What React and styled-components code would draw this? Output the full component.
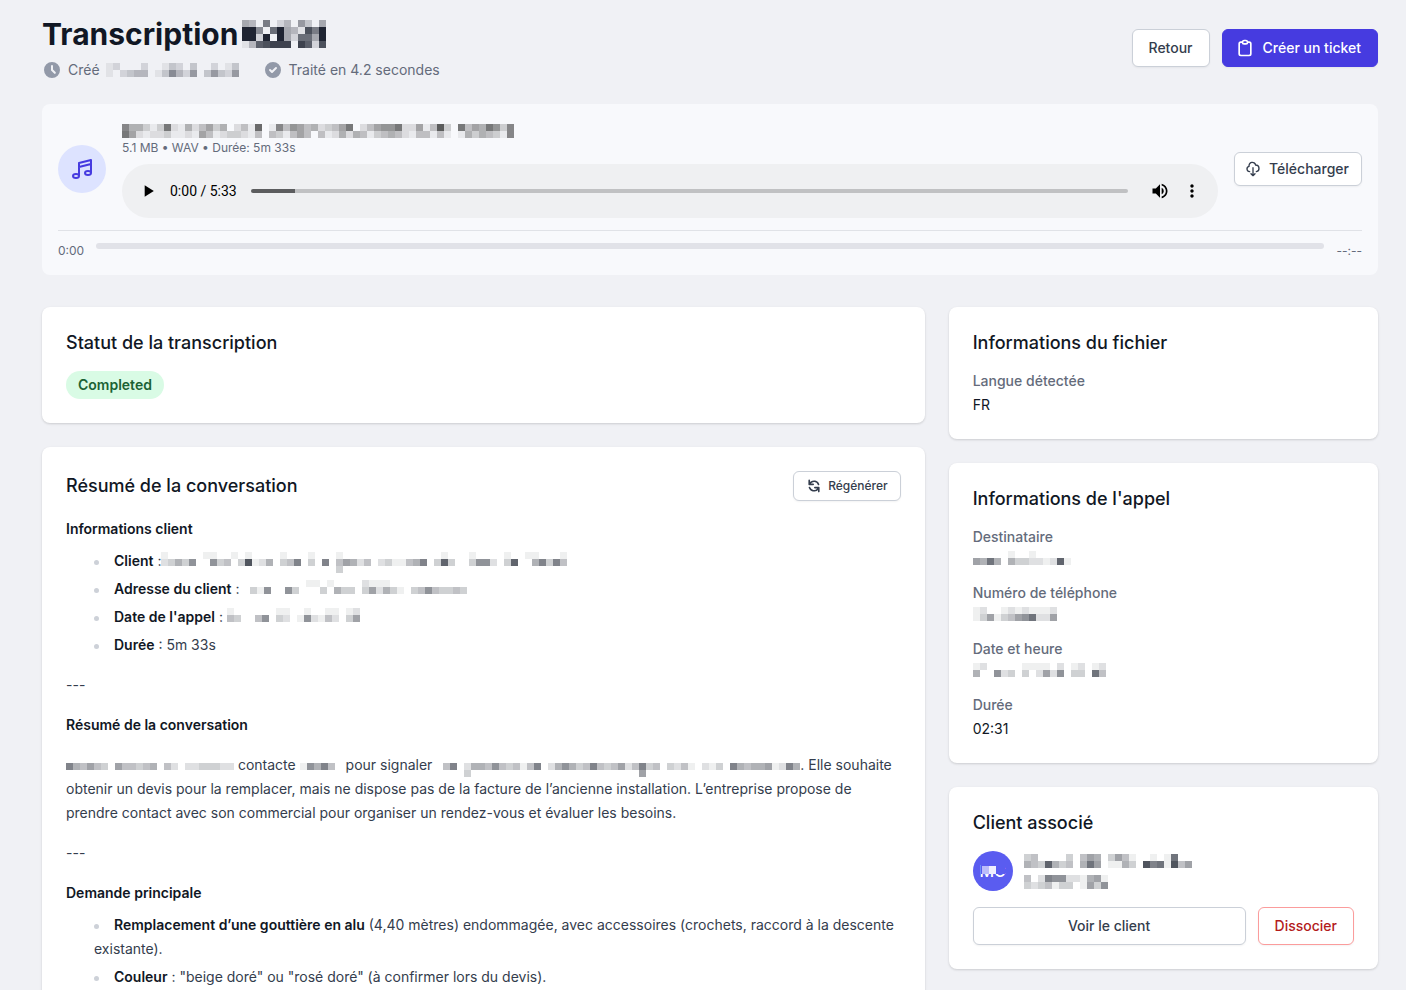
import React, { useState } from 'react';
import styled, { createGlobalStyle, css } from 'styled-components';
import {
  HiCheckCircle,
  HiClock,
  HiOutlineClipboard,
  HiOutlineCloudDownload,
  HiOutlineMusicNote,
  HiRefresh,
} from 'react-icons/hi';
import { MdMoreVert, MdPlayArrow, MdVolumeUp } from 'react-icons/md';

const GlobalStyle = createGlobalStyle`
  *, *::before, *::after {
    box-sizing: border-box;
  }
  body {
    margin: 0;
    background: #f0f1f5;
    color: #111724;
    font-family: Inter, 'Liberation Sans', sans-serif;
    font-size: 14px;
    line-height: 20px;
  }
  h1, h2, h3, p, ul, dl, dd {
    margin: 0;
    padding: 0;
  }
  button {
    font-family: inherit;
    cursor: pointer;
  }
`;

const Page = styled.main`
  padding: 16px 28px 24px 42px;
`;

const Header = styled.header`
  display: flex;
  align-items: center;
  justify-content: space-between;
`;

const Title = styled.h1`
  display: flex;
  align-items: center;
  gap: 4px;
  font-size: 30px;
  line-height: 36px;
  font-weight: 700;
`;

const MetaList = styled.div`
  display: flex;
  gap: 24px;
  margin-top: 8px;
  color: #646b7b;
`;

const Meta = styled.div`
  display: flex;
  align-items: center;
  gap: 6px;

  > svg:first-child {
    color: #9299a8;
  }
`;

const Actions = styled.div`
  display: flex;
  gap: 12px;
`;

const sizes = {
  small: css`
    padding: 6px 12px;
    font-size: 12px;
    line-height: 16px;
    gap: 6px;
  `,
  medium: css`
    padding: 8px 12px;
    font-size: 14px;
    line-height: 16px;
    gap: 8px;

    svg {
      margin-left: -2px;
    }
  `,
  large: css`
    padding: 8px 16px;
    font-size: 14px;
    line-height: 20px;
    gap: 8px;

    svg {
      margin-left: -4px;
    }
  `,
};

const variants = {
  plain: css`
    background: white;
    border-color: #cbd0d8;
    color: #343d4d;
  `,
  primary: css`
    background: #463be0;
    border-color: #463be0;
    color: white;
  `,
  danger: css`
    background: white;
    border-color: #fb9c9c;
    color: #b31b1b;
  `,
};

const Button = styled.button`
  display: inline-flex;
  align-items: center;
  justify-content: center;
  border: 1px solid;
  border-radius: 6px;
  font-weight: 500;
  white-space: nowrap;
  box-shadow: 0 1px 2px rgba(0, 0, 0, 0.05);
  flex: ${({ $grow }) => ($grow ? 1 : 'none')};
  ${({ $size = 'large' }) => sizes[$size]}
  ${({ $variant = 'plain' }) => variants[$variant]}
`;

const AudioPanel = styled.section`
  margin-top: 24px;
  padding: 16px;
  border-radius: 8px;
  background: #f8f9fc;
`;

const AudioRow = styled.div`
  display: flex;
  align-items: center;
  gap: 16px;
`;

const MusicBadge = styled.div`
  display: flex;
  align-items: center;
  justify-content: center;
  width: 48px;
  height: 48px;
  flex: none;
  border-radius: 50%;
  background: #dde3ff;
  color: #463be0;
`;

const AudioBody = styled.div`
  flex: 1;
  min-width: 0;
`;

const FileName = styled.div`
  height: 20px;
  padding-top: 4px;
`;

const FileMeta = styled.p`
  font-size: 12px;
  line-height: 16px;
  color: #646b7b;
`;

const Player = styled.div`
  display: flex;
  align-items: center;
  height: 54px;
  margin-top: 8px;
  padding: 0 16px;
  gap: 12px;
  border-radius: 27px;
  background: #eff0f2;
`;

const PlayerButton = styled.button`
  display: flex;
  padding: 0;
  border: 0;
  background: none;
  color: black;
`;

const PlayerTime = styled.span`
  font-family: Roboto, sans-serif;
  color: black;
`;

const Seek = styled.input`
  flex: 1;
  min-width: 0;
  height: 4px;
  margin: 0 10px 0 2px;
  appearance: none;
  border-radius: 2px;
  background: linear-gradient(to right, #5c5d5f 5%, #c0c1c3 5%);

  &::-webkit-slider-thumb {
    appearance: none;
    width: 4px;
    height: 4px;
    background: transparent;
  }
`;

const ProgressRow = styled.div`
  display: flex;
  gap: 12px;
  margin-top: 12px;
  padding-top: 12px;
  border-top: 1px solid #e0e2e7;
  font-size: 12px;
  line-height: 16px;
  color: #646b7b;
`;

const ProgressTrack = styled.div`
  flex: 1;
  height: 6px;
  border-radius: 3px;
  background: #e1e2e8;
`;

const Columns = styled.div`
  display: grid;
  grid-template-columns: repeat(3, minmax(0, 1fr));
  gap: 24px;
  margin-top: 32px;
  align-items: start;
`;

const Column = styled.div`
  display: grid;
  gap: 24px;
  grid-column: span ${({ $span }) => $span};
`;

const Card = styled.section`
  padding: 24px;
  border-radius: 8px;
  background: white;
  box-shadow: 0 1px 3px rgba(0, 0, 0, 0.1), 0 1px 2px rgba(0, 0, 0, 0.06);
`;

const CardHeader = styled.div`
  display: flex;
  align-items: center;
  justify-content: space-between;
  margin-bottom: 16px;
`;

const CardTitle = styled.h2`
  font-size: 18px;
  line-height: 24px;
  font-weight: 500;
`;

const Badge = styled.span`
  display: inline-block;
  padding: 4px 12px;
  border-radius: 14px;
  background: #d9fbe5;
  color: #1b6234;
  font-weight: 600;
  vertical-align: top;
`;

const Summary = styled.div`
  line-height: 24px;
  color: #343d4d;

  h3 {
    margin: 16px 0 8px;
    font-size: 14px;
    font-weight: 600;
    color: #111724;
  }
  h3:first-child {
    margin-top: 0;
  }
  p {
    margin: 16px 0;
  }
  ul {
    margin: 8px 0 16px;
    padding-left: 28px;
    list-style: none;
  }
  li + li {
    margin-top: 4px;
  }
  li::before {
    content: '';
    display: inline-block;
    width: 5px;
    height: 5px;
    margin-right: 15px;
    border-radius: 50%;
    background: #cdd1d8;
    vertical-align: middle;
  }
  strong {
    font-weight: 600;
    color: #111724;
  }
`;

const Details = styled.dl`
  display: grid;
  gap: 12px;

  dt {
    font-weight: 500;
    color: #646b7b;
  }
  dd {
    height: 20px;
    margin-top: 4px;
  }
`;

const ClientRow = styled.div`
  display: flex;
  align-items: center;
  gap: 11px;
`;

const Avatar = styled.div`
  position: relative;
  display: flex;
  align-items: center;
  justify-content: center;
  width: 40px;
  height: 40px;
  border-radius: 50%;
  background: #5a5cf0;
  color: white;
  font-size: 16px;
  font-weight: 500;

  svg {
    position: absolute;
    left: 8px;
    top: 12px;
  }
`;

const ClientLines = styled.div`
  display: grid;
  gap: 7px;
`;

const ClientActions = styled.div`
  display: flex;
  gap: 12px;
  margin-top: 16px;
`;

const MosaicSvg = styled.svg`
  flex: none;
  vertical-align: ${({ $inline }) => ($inline ? 'middle' : 'top')};
`;

const CELL = 7;

// Pixelated block for masked data: one hex digit per cell, 0 is clear and f is solid
const Mosaic = ({ rows, inline, color = '#111724' }) => (
  <MosaicSvg
    $inline={inline}
    width={rows[0].length * CELL}
    height={rows.length * CELL}
    shapeRendering="crispEdges"
    aria-hidden="true"
  >
    {rows.map((row, y) =>
      [...row].map(
        (level, x) =>
          level !== '0' && (
            <rect
              key={`${x}-${y}`}
              x={x * CELL}
              y={y * CELL}
              width={CELL}
              height={CELL}
              fill={color}
              fillOpacity={parseInt(level, 16) / 15}
            />
          )
      )
    )}
  </MosaicSvg>
);

const pad = (digits, length) => digits.padEnd(length, '0');

const masked = {
  title: ['540802406305', 'ee709e541b8e', 'ee2e0e52995e', '14abccc0ca2b'],
  created: ['1200020013203002013', '1023440137426036326'],
  file: [
    '8553139215246350241a0184764523469024677922614b3094659738',
    '96212231121641233214043146404125254134542144141015354318',
  ],
  client: [
    '1000001100101000010001000100000000000000100010000100110001',
    '235370073403b125034803080465240231145803a300377203a0058384',
    pad('0000000000000000000000000' + '3', 58),
  ],
  address: ['00000000011010000211100000000000', '03170073000305330362531034743343', pad('', 32)],
  date: ['1000000110010011012', '4300470320172142036', pad('', 19)],
  caller: [pad('', 24), '854643064434504202233322', pad('', 24)],
  company: ['000000', '175840', '000000'],
  reason: [
    pad('', 52),
    '0480255474341480257534843462483403241021308545561285',
    pad('000030000000000000000000000006', 52),
  ],
  recipient: ['00000100100000', '659505332212a1'],
  phone: ['120012121112', '136134679226'],
  callDate: ['1200000111102012012', '5007230302627033094'],
  clientName: ['340000304650364100101900', '543a5340596011530b891b46'],
  clientRef: ['402877221561', '323413301637'],
};

const AudioPlayer = () => {
  const [position, setPosition] = useState(0);

  return (
    <Player>
      <PlayerButton type="button" aria-label="Lecture">
        <MdPlayArrow size={20} />
      </PlayerButton>
      <PlayerTime>0:00 / 5:33</PlayerTime>
      <Seek
        type="range"
        min="0"
        max="333"
        value={position}
        onChange={(e) => setPosition(Number(e.target.value))}
        aria-label="Position de lecture"
      />
      <PlayerButton type="button" aria-label="Volume">
        <MdVolumeUp size={20} />
      </PlayerButton>
      <PlayerButton type="button" aria-label="Plus d'options">
        <MdMoreVert size={20} />
      </PlayerButton>
    </Player>
  );
};

const App = () => {
  return (
    <>
      <GlobalStyle />
      <Page>
        <Header>
          <div>
            <Title>
              Transcription <Mosaic rows={masked.title} />
            </Title>
            <MetaList>
              <Meta>
                <HiClock size={20} />
                Créé <Mosaic rows={masked.created} />
              </Meta>
              <Meta>
                <HiCheckCircle size={20} />
                Traité en 4.2 secondes
              </Meta>
            </MetaList>
          </div>
          <Actions>
            <Button type="button">Retour</Button>
            <Button type="button" $variant="primary">
              <HiOutlineClipboard size={20} />
              Créer un ticket
            </Button>
          </Actions>
        </Header>

        <AudioPanel>
          <AudioRow>
            <MusicBadge>
              <HiOutlineMusicNote size={24} />
            </MusicBadge>
            <AudioBody>
              <FileName>
                <Mosaic rows={masked.file} color="#222222" />
              </FileName>
              <FileMeta>5.1 MB • WAV • Durée: 5m 33s</FileMeta>
              <AudioPlayer />
            </AudioBody>
            <Button type="button" $size="medium">
              <HiOutlineCloudDownload size={16} />
              Télécharger
            </Button>
          </AudioRow>
          <ProgressRow>
            <span>0:00</span>
            <ProgressTrack role="progressbar" aria-label="Progression" aria-valuenow={0} />
            <span>--:--</span>
          </ProgressRow>
        </AudioPanel>

        <Columns>
          <Column $span={2}>
            <Card>
              <CardHeader>
                <CardTitle>Statut de la transcription</CardTitle>
              </CardHeader>
              <Badge>Completed</Badge>
            </Card>

            <Card>
              <CardHeader>
                <CardTitle>Résumé de la conversation</CardTitle>
                <Button type="button" $size="small">
                  <HiRefresh size={16} />
                  Régénérer
                </Button>
              </CardHeader>
              <Summary>
                <h3>Informations client</h3>
                <ul>
                  <li>
                    <strong>Client</strong> :<Mosaic inline rows={masked.client} />
                  </li>
                  <li>
                    <strong>Adresse du client</strong> : <Mosaic inline rows={masked.address} />
                  </li>
                  <li>
                    <strong>Date de l'appel</strong> : <Mosaic inline rows={masked.date} />
                  </li>
                  <li>
                    <strong>Durée</strong> : 5m 33s
                  </li>
                </ul>
                <p>---</p>
                <h3>Résumé de la conversation</h3>
                <p>
                  <Mosaic inline rows={masked.caller} /> contacte{' '}
                  <Mosaic inline rows={masked.company} /> pour signaler{' '}
                  <Mosaic inline rows={masked.reason} />. Elle souhaite obtenir un devis pour la
                  remplacer, mais ne dispose pas de la facture de l’ancienne installation.
                  L’entreprise propose de prendre contact avec son commercial pour organiser un
                  rendez-vous et évaluer les besoins.
                </p>
                <p>---</p>
                <h3>Demande principale</h3>
                <ul>
                  <li>
                    <strong>Remplacement d’une gouttière en alu</strong> (4,40 mètres) endommagée,
                    avec accessoires (crochets, raccord à la descente existante).
                  </li>
                  <li>
                    <strong>Couleur</strong> : "beige doré" ou "rosé doré" (à confirmer lors du
                    devis).
                  </li>
                </ul>
              </Summary>
            </Card>
          </Column>

          <Column $span={1}>
            <Card>
              <CardHeader>
                <CardTitle>Informations du fichier</CardTitle>
              </CardHeader>
              <Details>
                <div>
                  <dt>Langue détectée</dt>
                  <dd>FR</dd>
                </div>
              </Details>
            </Card>

            <Card>
              <CardHeader>
                <CardTitle>Informations de l'appel</CardTitle>
              </CardHeader>
              <Details>
                <div>
                  <dt>Destinataire</dt>
                  <dd>
                    <Mosaic rows={masked.recipient} />
                  </dd>
                </div>
                <div>
                  <dt>Numéro de téléphone</dt>
                  <dd>
                    <Mosaic rows={masked.phone} />
                  </dd>
                </div>
                <div>
                  <dt>Date et heure</dt>
                  <dd>
                    <Mosaic rows={masked.callDate} />
                  </dd>
                </div>
                <div>
                  <dt>Durée</dt>
                  <dd>02:31</dd>
                </div>
              </Details>
            </Card>

            <Card>
              <CardHeader>
                <CardTitle>Client associé</CardTitle>
              </CardHeader>
              <ClientRow>
                <Avatar>
                  MC
                  <svg width="24" height="11" aria-hidden="true">
                    <rect width="24" height="11" fill="#5a5cf0" />
                    <rect x="1" y="3" width="7" height="8" fill="#bbbcfa" />
                    <rect x="8" y="3" width="7" height="8" fill="#eeeefe" />
                  </svg>
                </Avatar>
                <ClientLines>
                  <Mosaic rows={masked.clientName} />
                  <Mosaic rows={masked.clientRef} />
                </ClientLines>
              </ClientRow>
              <ClientActions>
                <Button type="button" $grow>
                  Voir le client
                </Button>
                <Button type="button" $variant="danger">
                  Dissocier
                </Button>
              </ClientActions>
            </Card>
          </Column>
        </Columns>
      </Page>
    </>
  );
};

export default App;
